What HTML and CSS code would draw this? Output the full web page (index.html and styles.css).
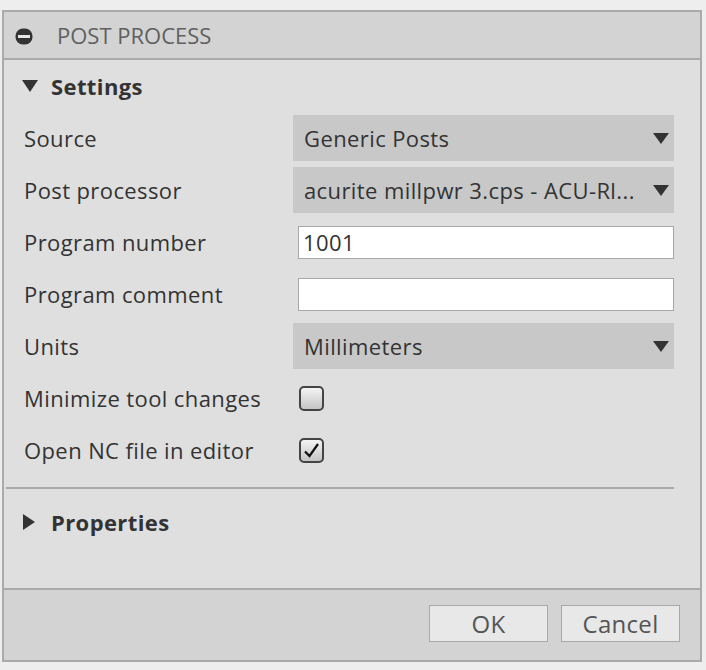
FILE: index.html
```html
<!DOCTYPE html>
<html>
<head>
<meta charset="utf-8">
<link rel="stylesheet" href="styles.css">
</head>
<body>
<div class="dialog">
  <div class="header">
    <svg class="hicon" width="18" height="17" viewBox="0 0 18 17"><rect x="0.5" y="0.5" width="17" height="16" rx="7.5" fill="#333"/><rect x="3" y="7" width="12" height="3" fill="#e6e6e6"/></svg>
    <span class="title">POST PROCESS</span>
  </div>
  <div class="body">
    <div class="section">
      <svg class="tri-down" width="16" height="12" viewBox="0 0 16 12"><path d="M0 0H16L8 12Z" fill="#333"/></svg>
      <span>Settings</span>
    </div>
    <div class="row">
      <span class="label">Source</span>
      <div class="select"><span class="val">Generic Posts</span><svg width="16" height="11" viewBox="0 0 16 11"><path d="M0 0H16L8 11Z" fill="#333"/></svg></div>
    </div>
    <div class="row">
      <span class="label">Post processor</span>
      <div class="select"><span class="val">acurite millpwr 3.cps - ACU-Rl...</span><svg width="16" height="11" viewBox="0 0 16 11"><path d="M0 0H16L8 11Z" fill="#333"/></svg></div>
    </div>
    <div class="row">
      <span class="label">Program number</span>
      <div class="input">1001</div>
    </div>
    <div class="row">
      <span class="label">Program comment</span>
      <div class="input"></div>
    </div>
    <div class="row">
      <span class="label">Units</span>
      <div class="select"><span class="val">Millimeters</span><svg width="16" height="11" viewBox="0 0 16 11"><path d="M0 0H16L8 11Z" fill="#333"/></svg></div>
    </div>
    <div class="row">
      <span class="label">Minimize tool changes</span>
      <div class="check"></div>
    </div>
    <div class="row">
      <span class="label">Open NC file in editor</span>
      <div class="check"><svg width="21" height="21" viewBox="0 0 21 21"><path d="M4 11.5L8.5 16L17 4" fill="none" stroke="#111" stroke-width="2.2"/></svg></div>
    </div>
    <div class="divider"></div>
    <div class="section">
      <svg class="tri-right" width="12" height="16" viewBox="0 0 12 16"><path d="M0 0V16L12 8Z" fill="#333"/></svg>
      <span>Properties</span>
    </div>
  </div>
  <div class="footer">
    <button class="btn ok">OK</button>
    <button class="btn">Cancel</button>
  </div>
</div>
</body>
</html>
```

FILE: styles.css
```css
* { box-sizing: border-box; }
body {
  margin: 0;
  background: #eeeeee;
  font-family: "Open Sans", "Noto Sans", sans-serif;
  color: #333;
}
.dialog {
  margin: 10px 4px 0 2px;
  width: 700px;
  height: 652px;
  border: 2px solid #aaaaaa;
  display: flex;
  flex-direction: column;
  background: #dfdfdf;
}
.header {
  height: 48px;
  background: #d3d3d3;
  border-bottom: 2px solid #aaaaaa;
  display: flex;
  align-items: center;
  padding-left: 11px;
}
.hicon { margin-top: 2px; }
.title {
  margin-left: 24px;
  font-size: 22px;
  color: #606060;
}
.body {
  height: 530px;
  border-bottom: 2px solid #aaaaaa;
  display: flex;
  flex-direction: column;
}
.section {
  height: 52px;
  display: flex;
  align-items: center;
  padding-left: 18px;
  font-weight: 700;
  font-size: 22px;
  letter-spacing: 0.4px;
  color: #333;
}
.section span { margin-left: 13px; }
.tri-right { margin-left: 1px; margin-right: 3px; }
.row {
  height: 52px;
  display: flex;
  align-items: center;
  padding-left: 20px;
  padding-right: 26px;
  font-size: 22px;
  letter-spacing: 0.4px;
}
.label {
  width: 269px;
  flex: none;
  color: #333;
  white-space: nowrap;
}
.select {
  flex: 1;
  height: 46px;
  background: #c8c8c8;
  display: flex;
  align-items: center;
  padding: 0 5px 0 11px;
  color: #333;
  min-width: 0;
}
.select .val {
  flex: 1;
  min-width: 0;
  white-space: nowrap;
}
.select svg { flex: none; margin-left: 2px; }
.input {
  flex: 1;
  margin-left: 5px;
  height: 33px;
  background: #ffffff;
  border: 1px solid #a8a8a8;
  padding-left: 4px;
  line-height: 31px;
  color: #333;
}
.check {
  margin-left: 6px;
  width: 25px;
  height: 25px;
  border: 2px solid #444;
  border-radius: 5px;
  background: linear-gradient(#f4f4f4, #c4c4c4);
  display: flex;
  align-items: center;
  justify-content: center;
}
.divider {
  height: 2px;
  background: #aaaaaa;
  margin: 11px 26px 7px 2px;
}
.footer {
  flex: 1;
  background: #d3d3d3;
  display: flex;
  justify-content: flex-end;
  align-items: center;
  padding-right: 20px;
  gap: 13px;
  padding-bottom: 3px;
}
.btn {
  width: 119px;
  height: 37px;
  background: #e8e8e8;
  border: 1px solid #a8a8a8;
  font-family: "Open Sans", "Noto Sans", sans-serif;
  font-size: 24px;
  letter-spacing: 0.3px;
  color: #555;
  padding: 0;
}
```
